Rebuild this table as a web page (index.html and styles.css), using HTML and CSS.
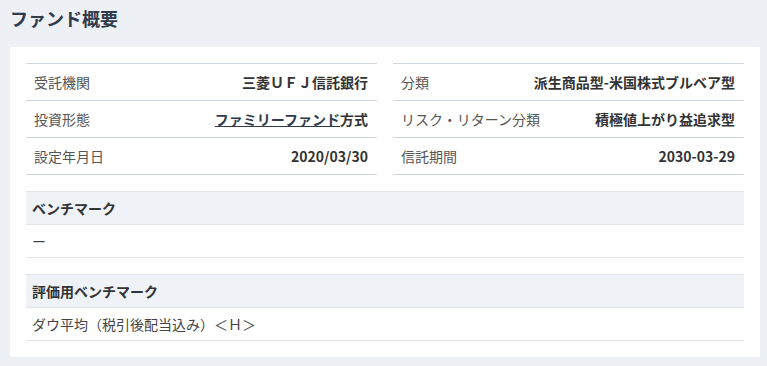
FILE: index.html
```html
<!DOCTYPE html>
<html lang="ja">
<head>
    <meta charset="UTF-8">
    <meta name="viewport" content="width=device-width, initial-scale=1.0">
    <title>ファンド概要</title>
    <link rel="stylesheet" href="styles.css">
</head>
<body>
    <h1 class="page-title">ファンド概要</h1>

    <section class="card">
        <div class="summary">
            <dl class="info">
                <div class="info-row">
                    <dt>受託機関</dt>
                    <dd>三菱ＵＦＪ信託銀行</dd>
                </div>
                <div class="info-row">
                    <dt>投資形態</dt>
                    <dd><a href="#">ファミリーファンド</a>方式</dd>
                </div>
                <div class="info-row">
                    <dt>設定年月日</dt>
                    <dd>2020/03/30</dd>
                </div>
            </dl>
            <dl class="info">
                <div class="info-row">
                    <dt>分類</dt>
                    <dd>派生商品型-米国株式ブルベア型</dd>
                </div>
                <div class="info-row">
                    <dt>リスク・リターン分類</dt>
                    <dd>積極値上がり益追求型</dd>
                </div>
                <div class="info-row">
                    <dt>信託期間</dt>
                    <dd>2030-03-29</dd>
                </div>
            </dl>
        </div>

        <table class="bench">
            <tr><th>ベンチマーク</th></tr>
            <tr><td>ー</td></tr>
        </table>
        <table class="bench">
            <tr><th>評価用ベンチマーク</th></tr>
            <tr><td>ダウ平均（税引後配当込み）＜Ｈ＞</td></tr>
        </table>
    </section>
</body>
</html>
```

FILE: styles.css
```css
body {
    margin: 0;
    background-color: #edf0f4;
    font-family: "Noto Sans CJK JP", "Noto Sans", sans-serif;
    color: #333;
}
.page-title {
    margin: 0 0 16px;
    padding: 5px 10px 0;
    font-size: 18px;
    line-height: 26px;
    font-weight: bold;
    color: #2f3b4b;
}
.card {
    width: 718px;
    margin-left: 10px;
    padding: 16px;
    background-color: #fff;
}
.summary {
    display: grid;
    grid-template-columns: minmax(0, 1fr) minmax(0, 1fr);
    gap: 16px;
    margin-bottom: 16px;
}
.info {
    margin: 0;
    border-top: 1px solid #cdd5df;
    font-size: 14px;
}
.info-row {
    display: flex;
    justify-content: space-between;
    align-items: center;
    gap: 12px;
    height: 36px;
    padding: 0 9px 0 8px;
    border-bottom: 1px solid #cdd5df;
    white-space: nowrap;
}
.info dt {
    color: #555;
}
.info dd {
    margin: 0;
    font-weight: bold;
    color: #333;
}
.info a {
    color: #2f3b4b;
    text-decoration: underline;
}
.bench {
    width: 100%;
    border-collapse: collapse;
    font-size: 14px;
    border-top: 1px solid #e2e5e9;
    margin-bottom: 16px;
}
.bench:last-child {
    margin-bottom: 0;
}
.bench th,
.bench td {
    height: 32px;
    padding: 0 6px;
    text-align: left;
    border-bottom: 1px solid #e2e5e9;
}
.bench th {
    background-color: #eff2f7;
    font-weight: bold;
    color: #333;
}
.bench td {
    color: #444;
}
```
